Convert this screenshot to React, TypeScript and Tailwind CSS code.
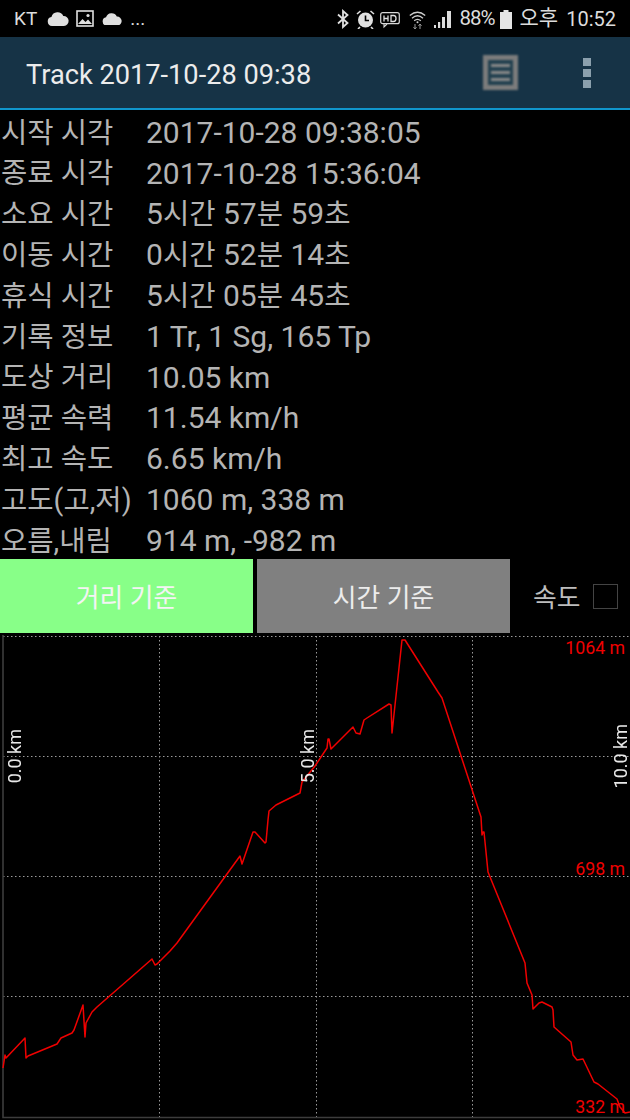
const rows: [string, string][] = [
  ["시작 시각", "2017-10-28 09:38:05"],
  ["종료 시각", "2017-10-28 15:36:04"],
  ["소요 시간", "5시간 57분 59초"],
  ["이동 시간", "0시간 52분 14초"],
  ["휴식 시간", "5시간 05분 45초"],
  ["기록 정보", "1 Tr, 1 Sg, 165 Tp"],
  ["도상 거리", "10.05 km"],
  ["평균 속력", "11.54 km/h"],
  ["최고 속도", "6.65 km/h"],
  ["고도(고,저)", "1060 m, 338 m"],
  ["오름,내림", "914 m, -982 m"],
];

const track =
  "3,1068 5,1055 6,1058 25,1038 26,1058 28,1056 57,1044 61,1038 72,1033 74,1030 83,1005 85,1037 86,1023 92,1012 97,1007 152,959 155,965 157,964 170,951 177,943 240,856 242,864 253,832 255,832 265,843 266,842 268,820 269,811 276,805 290,798 300,793 302,782 315,766 327,748 328,739 329,739 331,749 353,727 356,733 360,734 364,720 367,718 389,704 391,705 392,733 402,640 405,640 438,692 442,698 481,817 482,835 483,832 484,832 488,872 525,963 527,983 532,995 533,1009 539,1003 542,1002 552,1007 553,1010 554,1027 571,1042 573,1055 577,1060 583,1059 594,1082 598,1084 617,1099 620,1107 625,1113 630,1112";

function Cloud({ w }: { w: number }) {
  return (
    <svg width={w} height={w * 0.68} viewBox="0 0 22 15" fill="#e0e0e0">
      <path d="M5 15a4.6 4.6 0 0 1-.6-9.1A6.4 6.4 0 0 1 16.3 5 5 5 0 0 1 17 15z" />
    </svg>
  );
}

function StatusIcons() {
  return (
    <div className="flex items-center text-[#dcdcdc]">
      <svg width="12" height="20" viewBox="0 0 12 20" fill="none" stroke="#e0e0e0" strokeWidth="1.8">
        <path d="M1 5.5 10.5 14 6 18V2l4.5 4L1 14.5" />
      </svg>
      <svg className="ml-[7px]" width="19" height="20" viewBox="0 0 19 20">
        <circle cx="9.5" cy="11" r="7.5" fill="#e0e0e0" />
        <path d="M9.5 6.5v5h3.5" stroke="#000" strokeWidth="1.6" fill="none" />
        <path d="M1 5l3.5-3M18 5l-3.5-3M4 18l-2 2M15 18l2 2" stroke="#e0e0e0" strokeWidth="1.6" />
      </svg>
      <svg className="ml-[5px]" width="20" height="20" viewBox="0 0 20 20" fill="none">
        <rect x="0.7" y="3.7" width="18.6" height="11" rx="2" stroke="#d8d8d8" strokeWidth="1.2" />
        <path d="M4 15v3l3-3" stroke="#d8d8d8" strokeWidth="1.1" />
        <path d="M4 6.5v6M8 6.5v6M4 9.5h4M11 6.5v6h2.5q2.5 0 2.5-3t-2.5-3z" stroke="#e0e0e0" strokeWidth="1.3" />
      </svg>
      <svg className="ml-[9px]" width="17" height="20" viewBox="0 0 17 20" fill="none" stroke="#cfcfcf" strokeWidth="1.3">
        <path d="M.8 6.5Q8.5 0 16.2 6.5M3 9.2Q8.5 4.4 14 9.2M5.2 11.8Q8.5 9 11.8 11.8" />
        <circle cx="8.5" cy="13.2" r="1" fill="#cfcfcf" stroke="none" />
        <path d="M6 15v5M4.5 18.2 6 20l1.5-1.8M11 20v-5M9.5 16.8 11 15l1.5 1.8" stroke="#9a9a9a" strokeWidth="1" />
      </svg>
      <svg className="ml-[8px]" width="17" height="20" viewBox="0 0 17 20" fill="#dcdcdc">
        <rect x="0" y="16" width="2" height="3" />
        <rect x="4" y="13" width="2.2" height="6" />
        <rect x="8" y="8" width="3" height="11" />
        <rect x="13" y="2" width="4" height="17" />
      </svg>
      <span className="ml-[8px] text-[20.5px] tracking-[-1px] leading-none">88%</span>
      <svg className="ml-[5px]" width="12" height="20" viewBox="0 0 12 20" fill="#e4e4e4">
        <path d="M3.5 1h5v2H12v17H0V3h3.5z" />
      </svg>
      <span className="ml-[8px] text-[21px] leading-none">오후</span>
      <span className="ml-[8px] text-[20px] leading-none">10:52</span>
    </div>
  );
}

function Value({ text }: { text: string }) {
  const parts = text.split(/([가-힣]+)/);
  return (
    <span className="whitespace-nowrap text-[30px]">
      {parts.map((p, i) =>
        i % 2 === 1 ? (
          <span key={i} className="text-[28.6px]">{p}</span>
        ) : (
          <span key={i}>{p}</span>
        ),
      )}
    </span>
  );
}

function Chart() {
  return (
    <div className="relative h-[487px]">
      <svg className="block" width="630" height="487" viewBox="0 633 630 487" fill="none">
        <g stroke="#9a9a9a" strokeWidth="1" strokeDasharray="1.5 2.5">
          <path d="M3 636.5H630M3 756.5H630M3 876.5H630M3 996.5H630" />
          <path d="M159.5 636V1117M316.5 636V1117M472.5 636V1117" />
        </g>
        <path d="M3 635V1117.5H630" stroke="#3c3c3c" strokeWidth="1.6" />
        <polyline points={track} stroke="#f00000" strokeWidth="1.5" strokeLinejoin="round" />
      </svg>
      <span className="absolute right-[5px] top-[5px] text-[17.7px] leading-5 text-[#f00000]">1064 m</span>
      <span className="absolute right-[5px] top-[226px] text-[17.7px] leading-5 text-[#f00000]">698 m</span>
      <span className="absolute right-[5px] top-[464px] text-[17.7px] leading-5 text-[#f00000]">332 m</span>
      <span className="absolute left-[6px] top-[96px] text-[18px] leading-[18px] text-[#e8e8e8] [writing-mode:vertical-rl] rotate-180 whitespace-nowrap">0.0 km</span>
      <span className="absolute left-[299px] top-[96px] text-[18px] leading-[18px] text-[#e8e8e8] [writing-mode:vertical-rl] rotate-180 whitespace-nowrap">5.0 km</span>
      <span className="absolute left-[612px] top-[91px] text-[18px] leading-[18px] text-[#e8e8e8] [writing-mode:vertical-rl] rotate-180 whitespace-nowrap">10.0 km</span>
    </div>
  );
}

export default function App() {
  return (
    <div className="relative w-[630px] h-[1120px] overflow-hidden bg-black font-[Roboto,'Noto_Sans_CJK_KR',sans-serif]">
      <div className="h-[37px] flex items-center justify-between pl-[14px] pr-[14px] text-[#dcdcdc]">
        <div className="flex items-center">
          <span className="text-[19px] leading-none">KT</span>
          <span className="ml-[10px]"><Cloud w={22} /></span>
          <svg className="ml-[7px]" width="18" height="17" viewBox="0 0 18 17" fill="none">
            <rect x="1" y="1" width="16" height="15" stroke="#e0e0e0" strokeWidth="1.6" />
            <path d="M2 14l4.5-5 3 3 2.5-2.5 4 4.5z" fill="#e0e0e0" />
            <circle cx="12" cy="5.5" r="1.6" fill="#e0e0e0" />
          </svg>
          <span className="ml-[8px]"><Cloud w={20} /></span>
          <span className="ml-[8px] text-[19px] leading-none">...</span>
        </div>
        <StatusIcons />
      </div>

      <div className="h-[71px] bg-[#163346] flex items-center pl-[26px] pt-[6px]">
        <span className="text-[27.2px] leading-none text-[#ececec]">Track 2017-10-28 09:38</span>
        <div className="ml-auto mr-[112px] -mt-[6px] w-[35px] h-[35px] border-[5px] border-[#7c7c7c] bg-[#22404f] flex flex-col justify-center gap-[4px] px-[3px] blur-[1px]">
          <div className="h-[3px] bg-[#8a8a8a]" />
          <div className="h-[3px] bg-[#8a8a8a]" />
          <div className="h-[3px] bg-[#8a8a8a]" />
        </div>
      </div>
      <div className="h-[2px] bg-[#1096cc]" />

      <div className="h-[449px]">
        {rows.map(([label, value]) => (
          <div key={label} className="h-[40.8px] pt-[5px] flex items-center leading-none text-[#b4b4b4]">
            <span className="w-[146px] pl-[1px] whitespace-nowrap text-[28.6px]">{label}</span>
            <Value text={value} />
          </div>
        ))}
      </div>

      <div className="h-[74px] flex">
        <button className="w-[253px] pt-[4px] bg-[#88ff88] text-[25.8px] text-[#f4f4f4]">거리 기준</button>
        <button className="ml-[4px] w-[253px] pt-[4px] bg-[#808080] text-[25.8px] text-[#ececec]">시간 기준</button>
        <div className="flex items-center ml-[23px]">
          <span className="pt-[4px] text-[25.8px] text-[#bdbdbd]">속도</span>
          <div className="ml-[13px] w-[25px] h-[25px] border-[1.5px] border-[#444444]" />
        </div>
      </div>

      <Chart />

      <div className="absolute left-[583px] top-[58px] flex flex-col gap-[3px]">
        <div className="w-[8px] h-[8px] bg-[#8ba0ad]" />
        <div className="w-[8px] h-[8px] bg-[#8ba0ad]" />
        <div className="w-[8px] h-[8px] bg-[#8ba0ad]" />
      </div>
    </div>
  );
}
